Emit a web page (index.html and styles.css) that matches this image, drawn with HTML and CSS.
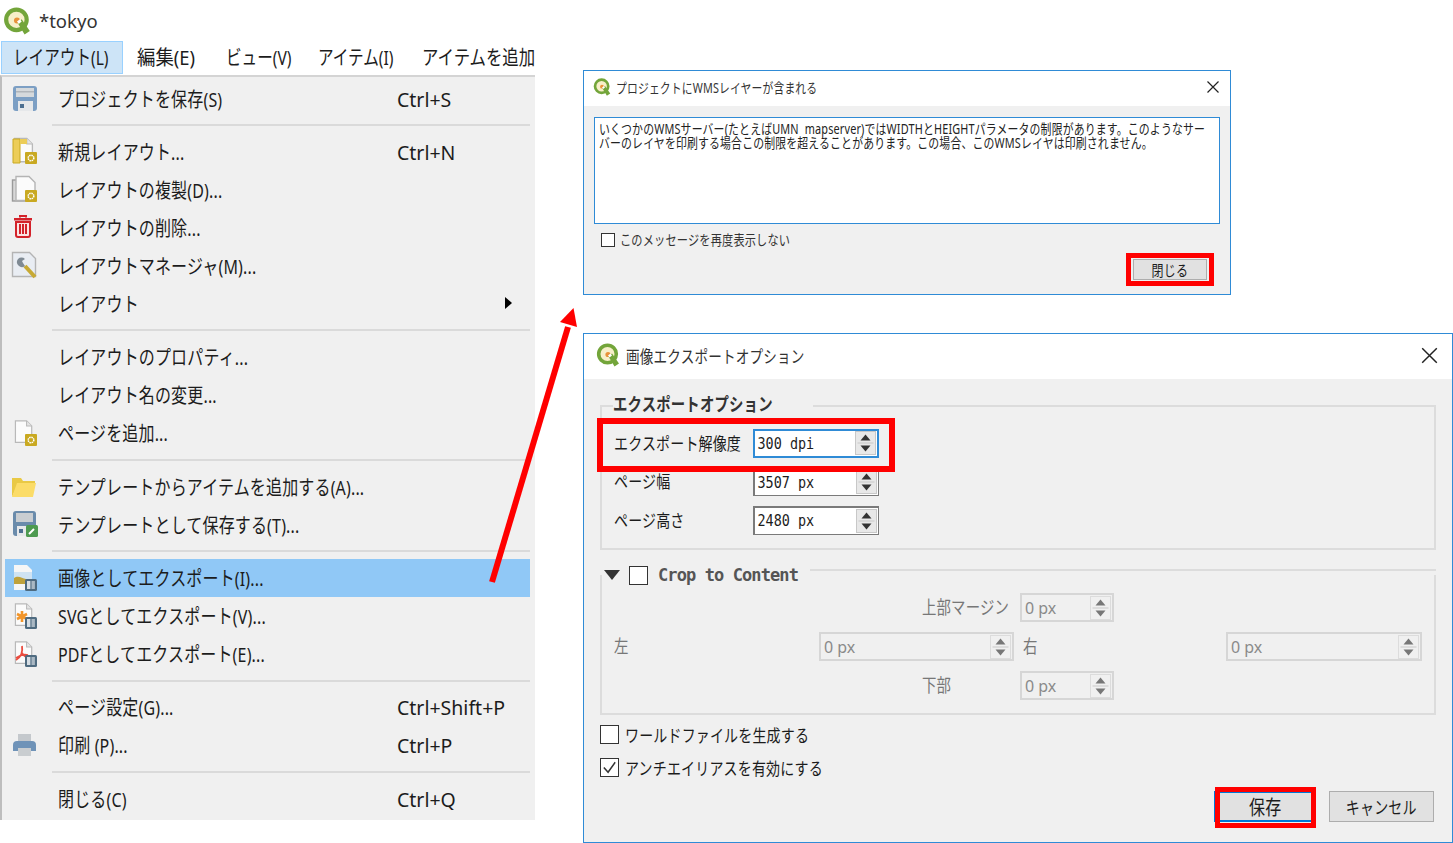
FILE: index.html
```html
<!DOCTYPE html>
<html lang="ja">
<head>
    <meta charset="UTF-8">
    <meta name="viewport" content="width=device-width, initial-scale=1.0">
    <title>tokyo</title>
    <link rel="stylesheet" href="styles.css">
</head>
<body>
    <!-- shared icon parts -->
    <svg class="defs" width="0" height="0">
        <defs>
            <symbol id="qgis" viewBox="0 0 24 24">
                <circle cx="11.5" cy="11" r="8.8" fill="#f7efc9" stroke="#73a53a" stroke-width="3.600"/>
                <circle cx="12" cy="11.500" r="2.600" fill="#e8923a"/>
                <path d="M12.500 13.500l3.500-3 7 10-4.500 3z" fill="#73a53a"/>
                <path d="M12 12.500l2.500-2 1.500 2-2.500 2z" fill="#fff"/>
            </symbol>
            <symbol id="page" viewBox="0 0 28 30">
                <path d="M4 1.500h13l6 6v19H4z" fill="#fbfbfb" stroke="#b9b9b9" stroke-width="1.400"/>
                <path d="M17 1.500v6h6" fill="#e4e4e4" stroke="#b9b9b9" stroke-width="1.200"/>
            </symbol>
            <symbol id="gear" viewBox="0 0 12 12">
                <rect width="12" height="12" rx="1" fill="#c9a921"/>
                <circle cx="6" cy="6" r="2.800" fill="none" stroke="#fff" stroke-width="1.500" stroke-dasharray="1.500 .7"/>
            </symbol>
            <symbol id="disk" viewBox="0 0 12 12">
                <rect width="12" height="12" rx="1.500" fill="#4f6b80"/>
                <rect x="2" y="2" width="3.400" height="8" fill="#d7dee4"/>
                <rect x="6.500" y="2" width="3.400" height="8" fill="#aab8c3"/>
            </symbol>
            <symbol id="spin" viewBox="0 0 18 22">
                <path d="M9 2.500l5 6H4z" fill="currentColor"/>
                <path d="M9 19.500l5-6H4z" fill="currentColor"/>
                <path d="M1 11h16" stroke="#c8c8c8"/>
            </symbol>
        </defs>
    </svg>

    <div class="canvas">
        <!-- layout window with its open menu -->
        <section class="layout-window">
            <header class="app-title">
                <svg class="app-logo"><use href="#qgis"/></svg>
                <span class="app-name">*tokyo</span>
            </header>
            <nav class="menubar">
                <span class="menubar-item active"><span class="t">レイアウト(L)</span></span>
                <span class="menubar-item edit"><span class="t">編集(E)</span></span>
                <span class="menubar-item view"><span class="t">ビュー(V)</span></span>
                <span class="menubar-item item"><span class="t">アイテム(I)</span></span>
                <span class="menubar-item add"><span class="t">アイテムを追加</span></span>
            </nav>
            <div class="menu">
                <div class="menu-row">
                    <span class="menu-icon">
                        <svg width="28" height="28" viewBox="0 0 28 28">
                            <rect x="3" y="2" width="24" height="25" rx="3" fill="#7c9fc4"/>
                            <rect x="6" y="4" width="18" height="9" fill="#d5d9dc"/>
                            <rect x="6" y="7" width="18" height="1.500" fill="#b0b5ba"/>
                            <rect x="8" y="17" width="15" height="10" fill="#e6e8ea"/>
                            <rect x="10" y="20" width="4" height="4" fill="#4d6f90"/>
                        </svg>
                    </span>
                    <span class="menu-label"><span class="t">プロジェクトを保存(S)</span></span>
                    <span class="menu-key">Ctrl+S</span>
                </div>
                <div class="menu-sep"></div>
                <div class="menu-row">
                    <span class="menu-icon">
                        <svg width="28" height="28" viewBox="0 0 28 28">
                            <use href="#page" width="28" height="28"/>
                            <path d="M3 2h7v24H3z" fill="#eccd58" stroke="#c9a921"/>
                            <path d="M10 2h7v5H10z" fill="#eccd58"/>
                            <use href="#gear" x="15" y="15" width="12" height="12"/>
                        </svg>
                    </span>
                    <span class="menu-label"><span class="t">新規レイアウト...</span></span>
                    <span class="menu-key">Ctrl+N</span>
                </div>
                <div class="menu-row">
                    <span class="menu-icon">
                        <svg width="28" height="28" viewBox="0 0 28 28">
                            <rect x="2.500" y="5" width="18" height="21" fill="#d8d8d8" stroke="#9a9a9a" stroke-width="1.400"/>
                            <path d="M6 1.500h13l6 6v18H6z" fill="#fbfbfb" stroke="#b4b4b4" stroke-width="1.400"/>
                            <use href="#gear" x="15" y="15" width="12" height="12"/>
                        </svg>
                    </span>
                    <span class="menu-label"><span class="t">レイアウトの複製(D)...</span></span>
                </div>
                <div class="menu-row">
                    <span class="menu-icon">
                        <svg width="28" height="28" viewBox="0 0 28 28">
                            <path d="M10 4.500V3h6v1.500" fill="none" stroke="#d3222a" stroke-width="2"/>
                            <rect x="4" y="5" width="18" height="2.500" fill="#d3222a"/>
                            <path d="M6 9h14v13a2 2 0 0 1-2 2H8a2 2 0 0 1-2-2z" fill="#fbe3e3" stroke="#d3222a" stroke-width="2"/>
                            <path d="M10 11v10M13 11v10M16 11v10" stroke="#d3222a" stroke-width="2"/>
                        </svg>
                    </span>
                    <span class="menu-label"><span class="t">レイアウトの削除...</span></span>
                </div>
                <div class="menu-row">
                    <span class="menu-icon">
                        <svg width="28" height="28" viewBox="0 0 28 28">
                            <path d="M2.500 1.500h17l6 6v18h-23z" fill="#e9edf3" stroke="#b4b4b4" stroke-width="1.400"/>
                            <path d="M25 26l-10-11" stroke="#c7a934" stroke-width="4"/>
                            <path d="M8 8a5 5 0 0 0 7 7l-2-3-1-2 3-2a5 5 0 0 0-7 0z" fill="#7f8a94"/>
                        </svg>
                    </span>
                    <span class="menu-label"><span class="t">レイアウトマネージャ(M)...</span></span>
                </div>
                <div class="menu-row">
                    <span class="menu-icon"></span>
                    <span class="menu-label"><span class="t">レイアウト</span></span>
                    <span class="submenu-arrow"></span>
                </div>
                <div class="menu-sep"></div>
                <div class="menu-row">
                    <span class="menu-icon"></span>
                    <span class="menu-label"><span class="t">レイアウトのプロパティ...</span></span>
                </div>
                <div class="menu-row">
                    <span class="menu-icon"></span>
                    <span class="menu-label"><span class="t">レイアウト名の変更...</span></span>
                </div>
                <div class="menu-row">
                    <span class="menu-icon">
                        <svg width="28" height="28" viewBox="0 0 28 28">
                            <use href="#page" x="2" y="0" width="24" height="27"/>
                            <use href="#gear" x="15" y="15" width="12" height="12"/>
                        </svg>
                    </span>
                    <span class="menu-label"><span class="t">ページを追加...</span></span>
                </div>
                <div class="menu-sep"></div>
                <div class="menu-row">
                    <span class="menu-icon">
                        <svg width="28" height="28" viewBox="0 0 28 28">
                            <path d="M2 6h9l2 3h12v3H8L2 25z" fill="#e9c945"/>
                            <path d="M7 11h19l-3 14H2z" fill="#fbdc68"/>
                        </svg>
                    </span>
                    <span class="menu-label"><span class="t">テンプレートからアイテムを追加する(A)...</span></span>
                </div>
                <div class="menu-row">
                    <span class="menu-icon">
                        <svg width="28" height="28" viewBox="0 0 28 28">
                            <rect x="3" y="1" width="23" height="25" rx="3" fill="#6a8bab"/>
                            <rect x="6" y="3" width="17" height="9" fill="#c9cdd1"/>
                            <rect x="7" y="16" width="15" height="10" fill="#e6e8ea"/>
                            <rect x="9" y="19" width="4" height="4" fill="#4d6f90"/>
                            <rect x="16" y="15" width="12" height="12" rx="1.500" fill="#4e9a50"/>
                            <path d="M19 24l5-5" stroke="#fff" stroke-width="2"/>
                        </svg>
                    </span>
                    <span class="menu-label"><span class="t">テンプレートとして保存する(T)...</span></span>
                </div>
                <div class="menu-sep"></div>
                <div class="menu-row selected">
                    <span class="menu-icon">
                        <svg width="28" height="28" viewBox="0 0 28 28">
                            <path d="M4 1h13l5 5v20H4z" fill="#f6f6f6"/>
                            <rect x="4" y="8" width="18" height="12" fill="#cfe3f3"/>
                            <path d="M4 20v-6c4-3 8 0 12 1l6 5z" fill="#bfa23c"/>
                            <use href="#disk" x="15" y="15" width="12" height="12"/>
                        </svg>
                    </span>
                    <span class="menu-label"><span class="t">画像としてエクスポート(I)...</span></span>
                </div>
                <div class="menu-row">
                    <span class="menu-icon">
                        <svg width="28" height="28" viewBox="0 0 28 28">
                            <use href="#page" x="2" y="0" width="24" height="27"/>
                            <path d="M12 9v11M7 12l10 5M17 12L7 17" stroke="#f2952a" stroke-width="2.600"/>
                            <use href="#disk" x="15" y="15" width="12" height="12"/>
                        </svg>
                    </span>
                    <span class="menu-label"><span class="t">SVGとしてエクスポート(V)...</span></span>
                </div>
                <div class="menu-row">
                    <span class="menu-icon">
                        <svg width="28" height="28" viewBox="0 0 28 28">
                            <use href="#page" x="2" y="0" width="24" height="27"/>
                            <path d="M12 6c1 6-1 11-6 14M12 13c2 3 4 5 8 5M6 18c4-3 8-4 12-3" fill="none" stroke="#ea4c3f" stroke-width="1.800"/>
                            <use href="#disk" x="15" y="15" width="12" height="12"/>
                        </svg>
                    </span>
                    <span class="menu-label"><span class="t">PDFとしてエクスポート(E)...</span></span>
                </div>
                <div class="menu-sep"></div>
                <div class="menu-row">
                    <span class="menu-icon"></span>
                    <span class="menu-label"><span class="t">ページ設定(G)...</span></span>
                    <span class="menu-key">Ctrl+Shift+P</span>
                </div>
                <div class="menu-row">
                    <span class="menu-icon">
                        <svg width="28" height="28" viewBox="0 0 28 28">
                            <rect x="8" y="3" width="13" height="7" fill="#c4c8cc"/>
                            <path d="M3 14a4 4 0 0 1 4-4h15a4 4 0 0 1 4 4v6H3z" fill="#6f93b8"/>
                            <rect x="8" y="17" width="13" height="8" fill="#c9cdd0"/>
                        </svg>
                    </span>
                    <span class="menu-label"><span class="t">印刷 (P)...</span></span>
                    <span class="menu-key">Ctrl+P</span>
                </div>
                <div class="menu-sep"></div>
                <div class="menu-row">
                    <span class="menu-icon"></span>
                    <span class="menu-label"><span class="t">閉じる(C)</span></span>
                    <span class="menu-key">Ctrl+Q</span>
                </div>
            </div>
        </section>

        <!-- WMS warning -->
        <section class="dialog wms">
            <header class="dialog-title">
                <svg class="dialog-logo"><use href="#qgis"/></svg>
                <span class="t">プロジェクトにWMSレイヤーが含まれる</span>
                <svg class="dialog-close" viewBox="0 0 14 14"><path d="M1.500 1.500l11 11M12.500 1.500l-11 11" stroke="#222" stroke-width="1.200"/></svg>
            </header>
            <div class="wms-body">
                <div class="wms-message">
                    <p><span class="t">いくつかのWMSサーバー(たとえばUMN&nbsp;&nbsp;mapserver)ではWIDTHとHEIGHTパラメータの制限があります。このようなサー</span></p>
                    <p><span class="t">バーのレイヤを印刷する場合この制限を超えることがあります。この場合、このWMSレイヤは印刷されません。</span></p>
                </div>
                <label class="wms-check"><span class="checkbox"></span><span class="t">このメッセージを再度表示しない</span></label>
                <div class="wms-actions"><span class="btn wms-close"><span class="t">閉じる</span></span></div>
            </div>
        </section>

        <!-- image export options -->
        <section class="dialog export">
            <header class="dialog-title">
                <svg class="dialog-logo"><use href="#qgis"/></svg>
                <span class="t">画像エクスポートオプション</span>
                <svg class="dialog-close" viewBox="0 0 14 14"><path d="M1 1l12 12M13 1L1 13" stroke="#222" stroke-width="1.200"/></svg>
            </header>
            <div class="export-body">
                <fieldset class="group options">
                    <legend><span class="t">エクスポートオプション</span></legend>
                    <div class="opt-row">
                        <span class="opt-label"><span class="t">エクスポート解像度</span></span>
                        <span class="spinbox focus"><span class="value">300 dpi</span><span class="spin"><svg><use href="#spin"/></svg></span></span>
                    </div>
                    <div class="opt-row">
                        <span class="opt-label"><span class="t">ページ幅</span></span>
                        <span class="spinbox"><span class="value">3507 px</span><span class="spin"><svg><use href="#spin"/></svg></span></span>
                    </div>
                    <div class="opt-row">
                        <span class="opt-label"><span class="t">ページ高さ</span></span>
                        <span class="spinbox"><span class="value">2480 px</span><span class="spin"><svg><use href="#spin"/></svg></span></span>
                    </div>
                </fieldset>

                <fieldset class="group crop">
                    <legend>
                        <span class="triangle"></span>
                        <span class="checkbox big"></span>
                        <span class="crop-title">Crop to Content</span>
                    </legend>
                    <div class="crop-grid">
                        <span class="crop-label top-label"><span class="t">上部マージン</span></span>
                        <span class="spinbox off small top-box"><span class="value">0 px</span><span class="spin"><svg><use href="#spin"/></svg></span></span>
                        <span class="crop-label left-label"><span class="t">左</span></span>
                        <span class="spinbox off left-box"><span class="value">0 px</span><span class="spin"><svg><use href="#spin"/></svg></span></span>
                        <span class="crop-label right-label"><span class="t">右</span></span>
                        <span class="spinbox off right-box"><span class="value">0 px</span><span class="spin"><svg><use href="#spin"/></svg></span></span>
                        <span class="crop-label bottom-label"><span class="t">下部</span></span>
                        <span class="spinbox off small bottom-box"><span class="value">0 px</span><span class="spin"><svg><use href="#spin"/></svg></span></span>
                    </div>
                </fieldset>

                <label class="check-row"><span class="checkbox big"></span><span class="t">ワールドファイルを生成する</span></label>
                <label class="check-row second">
                    <span class="checkbox big"><svg viewBox="0 0 18 18"><path d="M3 9l4.500 5L15 3.500" fill="none" stroke="#333" stroke-width="1.600"/></svg></span>
                    <span class="t">アンチエイリアスを有効にする</span>
                </label>
                <div class="export-actions">
                    <span class="btn save"><span class="t">保存</span></span>
                    <span class="btn cancel"><span class="t">キャンセル</span></span>
                </div>
            </div>
        </section>

        <!-- red callouts -->
        <div class="callout c-close"></div>
        <div class="callout c-dpi"></div>
        <div class="callout c-save"></div>
        <svg class="arrow" viewBox="0 0 100 290" width="100" height="290">
            <path d="M3 277L79 22" stroke="#f00" stroke-width="6"/>
            <path d="M84.500 3L71 17 88 22z" fill="#f00"/>
        </svg>
    </div>
</body>
</html>
```

FILE: styles.css
```css
* {
    box-sizing: border-box;
}
body {
    margin: 0;
    background: #fff;
    color: #1c1c1c;
    font-family: "Noto Sans", "Noto Sans CJK JP", sans-serif;
}
.defs {
    position: absolute;
}
.canvas {
    position: relative;
    width: 1453px;
    height: 843px;
    overflow: hidden;
}
/* narrow UI lettering */
.t {
    display: inline-block;
    white-space: nowrap;
    letter-spacing: .2px;
    transform: scaleX(.8);
    transform-origin: left center;
}

/* layout window */
.layout-window {
    position: absolute;
    left: 0;
    top: 0;
    width: 535px;
    height: 820px;
    overflow: hidden;
}
.app-title {
    display: flex;
    align-items: center;
    height: 41px;
    padding-left: 3px;
}
.app-logo {
    width: 28px;
    height: 28px;
}
.app-name {
    margin-left: 8px;
    font-size: 18.500px;
    color: #333;
}
.menubar {
    display: flex;
    height: 34px;
    font-size: 20px;
    line-height: 34px;
}
.menubar .t {
    letter-spacing: 0;
    transform: scaleX(.78);
}
.menubar-item {
    flex: none;
    width: 100px;
    overflow: visible;
}
.menubar-item.active {
    width: 122px;
    margin-left: 1px;
    padding-left: 11px;
    height: 33px;
    line-height: 31px;
    background: #cde4f7;
    border: 1px solid #99d1ff;
}
.menubar-item.edit {
    margin-left: 14px;
    width: 89px;
}
.menubar .edit .t {
    transform: scaleX(.92);
}
.menubar-item.view {
    width: 92px;
}
.menubar-item.item {
    width: 104px;
}
.menubar .add .t {
    transform: scaleX(.82);
}
.menu {
    height: 745px;
    padding-top: 2px;
    background: #f0f0f0;
    border-top: 2px solid #d4d4d4;
    border-left: 2px solid #bdbdbd;
}
.menu-row {
    display: flex;
    align-items: center;
    height: 38px;
    margin-right: 5px;
    font-size: 20px;
}
.menu-row.selected {
    margin-left: 3px;
    background: #90c8f6;
}
.menu-row.selected .menu-icon {
    width: 53px;
    padding-left: 5px;
}
.menu-icon {
    display: flex;
    align-items: center;
    flex: none;
    width: 56px;
    height: 28px;
    padding-left: 8px;
}
.menu-label {
    flex: none;
    width: 339px;
}
.menu-key {
    margin-top: 2px;
    font-size: 19.500px;
    white-space: nowrap;
}
.menu-sep {
    height: 15.400px;
    padding: 7px 5px 0 50px;
}
.menu-sep::after {
    content: "";
    display: block;
    height: 2px;
    background: #dadada;
}
.submenu-arrow {
    width: 0;
    height: 0;
    margin-left: 108px;
    border-left: 7px solid #000;
    border-top: 6px solid transparent;
    border-bottom: 6px solid transparent;
}

/* dialogs */
.dialog {
    position: absolute;
    background: #f0f0f0;
    border: 1px solid #2f8bd6;
}
.dialog.wms {
    left: 583px;
    top: 70px;
    width: 648px;
    height: 225px;
}
.dialog.export {
    left: 583px;
    top: 333px;
    width: 870px;
    height: 510px;
}
.dialog-title {
    display: flex;
    align-items: center;
    background: #fff;
}
.wms .dialog-title {
    height: 35px;
    padding: 0 0 3px 9px;
    font-size: 13.500px;
    color: #333;
}
.export .dialog-title {
    height: 45px;
    padding: 0 0 3px 12px;
    font-size: 17px;
    color: #333;
}
.dialog-logo {
    flex: none;
    width: 18px;
    height: 18px;
    margin-right: 5px;
}
.export .dialog-logo {
    width: 24px;
    height: 24px;
    margin-right: 6px;
}
.dialog-close {
    width: 14px;
    height: 14px;
    margin-left: auto;
    margin-right: 10px;
}
.export .dialog-close {
    width: 17px;
    height: 17px;
    margin-right: 14px;
}

.wms-body {
    padding: 11px 10px 0;
}
.wms-message {
    height: 107px;
    padding: 4px 4px 0;
    background: #fff;
    border: 1px solid #2f8bd6;
    font-size: 13.600px;
    line-height: 14px;
    color: #222;
}
.wms-message p {
    margin: 0;
}
.wms-check {
    display: flex;
    align-items: center;
    gap: 5px;
    height: 18px;
    margin: 7px 0 0 7px;
    font-size: 14px;
    color: #333;
}
.wms-check .t {
    margin-top: -3px;
}
.checkbox {
    display: block;
    flex: none;
    width: 14px;
    height: 14px;
    background: #fff;
    border: 1px solid #333;
}
.checkbox.big {
    width: 19px;
    height: 19px;
}
.checkbox svg {
    display: block;
    width: 17px;
    height: 17px;
}
.wms-actions {
    display: flex;
    justify-content: flex-end;
    margin: 10px 13px 0 0;
}
.btn {
    display: flex;
    align-items: center;
    justify-content: center;
    background: #e1e1e1;
    border: 1px solid #adadad;
}
.btn .t {
    transform-origin: center;
}
.wms-close {
    width: 74px;
    height: 21px;
    font-size: 15px;
}

/* export dialog body */
.export-body {
    padding: 15px 16px 0;
    font-size: 17.500px;
}
.group {
    min-width: 0;
    margin: 0;
    background: transparent;
    border: 2px solid #dcdcdc;
}
.options {
    height: 156px;
    padding: 6px 0 0 12px;
}
.options legend {
    padding: 0;
    margin-left: -1px;
    font-weight: 700;
    font-size: 18px;
    line-height: 20px;
    height: 24px;
    color: #333;
}
.opt-row {
    display: flex;
    align-items: center;
    height: 38.500px;
}
.opt-label {
    flex: none;
    width: 139px;
    margin-bottom: 2px;
}
.spinbox {
    display: flex;
    align-items: center;
    width: 126px;
    height: 29px;
    background: #fff;
    border: 2px solid #7a7a7a;
    border-right-width: 1px;
    border-bottom-width: 1px;
    font-family: "DejaVu Sans Mono", "Liberation Mono", monospace;
    font-size: 16px;
}
.spinbox.focus {
    border: 2px solid #2f8bd6;
}
.spinbox .value {
    flex: 1;
    padding-left: 3px;
    white-space: nowrap;
    transform: scaleX(.84);
    transform-origin: left center;
}
.spin {
    display: block;
    width: 21px;
    height: 24px;
    margin-right: 1px;
    color: #333;
    background: #e8e8e8;
    border: 1px solid #c8c8c8;
}
.spin svg {
    display: block;
    width: 19px;
    height: 22px;
}

.crop {
    height: 152px;
    margin-top: 13px;
    padding: 0 0 0 12px;
    border-top: 0;
}
.crop legend {
    display: flex;
    align-items: center;
    width: 100%;
    padding: 0;
    margin-left: -10px;
    height: 24px;
    color: #333;
}
/* header rule of the collapsible group sits above the title's centre */
.crop legend::after {
    content: "";
    flex: 1;
    height: 2px;
    margin-bottom: 11px;
    margin-right: -12px;
    background: #dcdcdc;
}
.triangle {
    width: 0;
    height: 0;
    border-top: 10px solid #333;
    border-left: 8px solid transparent;
    border-right: 8px solid transparent;
}
.crop legend .checkbox {
    margin: 0 10px 0 9px;
}
.crop-title {
    padding-right: 12px;
    font-family: "DejaVu Sans Mono", "Liberation Mono", monospace;
    font-size: 17px;
    font-weight: 700;
    letter-spacing: -.9px;
    color: #555;
}
.crop-grid {
    display: grid;
    grid-template-columns: 205px 195px 212px 196px;
    grid-template-rows: 29px 29px 29px;
    row-gap: 10px;
    align-items: center;
    margin-top: 6px;
    color: #777;
}
.crop-label {
    margin-bottom: 3px;
    font-size: 18px;
}
.top-label {
    grid-column: 2;
    grid-row: 1;
    margin-left: 103px;
}
.top-box {
    grid-column: 2 / 4;
    grid-row: 1;
    margin-left: 201px;
}
.left-label {
    grid-column: 1;
    grid-row: 2;
}
.left-box {
    grid-column: 2;
    grid-row: 2;
}
.right-label {
    grid-column: 3;
    grid-row: 2;
    margin-left: 9px;
}
.right-box {
    grid-column: 4;
    grid-row: 2;
}
.bottom-label {
    grid-column: 2;
    grid-row: 3;
    margin-left: 103px;
}
.bottom-box {
    grid-column: 2 / 4;
    grid-row: 3;
    margin-left: 201px;
}
.spinbox.off {
    width: auto;
    height: 29px;
    background: #f0f0f0;
    border: 2px solid #d6d6d6;
    font-family: "Noto Sans", sans-serif;
    font-size: 16px;
    color: #8a8a8a;
}
.spinbox.off .value {
    transform: none;
}
.spinbox.off.small {
    width: 94px;
}
.spinbox.off .spin {
    color: #777;
    background: #f0f0f0;
    border-color: #dcdcdc;
}

.check-row {
    display: flex;
    align-items: center;
    gap: 6px;
    height: 19px;
    margin-top: 10px;
}
.check-row.second {
    margin-top: 14px;
}
.export-actions {
    display: flex;
    justify-content: flex-end;
    gap: 13px;
    margin: 14px 2px 0 0;
}
.btn.save {
    width: 102px;
    height: 31px;
    border: 2px solid #0078d7;
    font-size: 20px;
}
.btn.cancel {
    width: 105px;
    height: 31px;
}

/* red callouts */
.callout {
    position: absolute;
    border: 6px solid #f00;
}
.c-close {
    left: 1126px;
    top: 253px;
    width: 88px;
    height: 33px;
    border-width: 5px;
}
.c-dpi {
    left: 597px;
    top: 418px;
    width: 298px;
    height: 54px;
}
.c-save {
    left: 1215px;
    top: 787px;
    width: 101px;
    height: 41px;
    border-width: 5px;
}
.arrow {
    position: absolute;
    left: 489px;
    top: 305px;
}
```
